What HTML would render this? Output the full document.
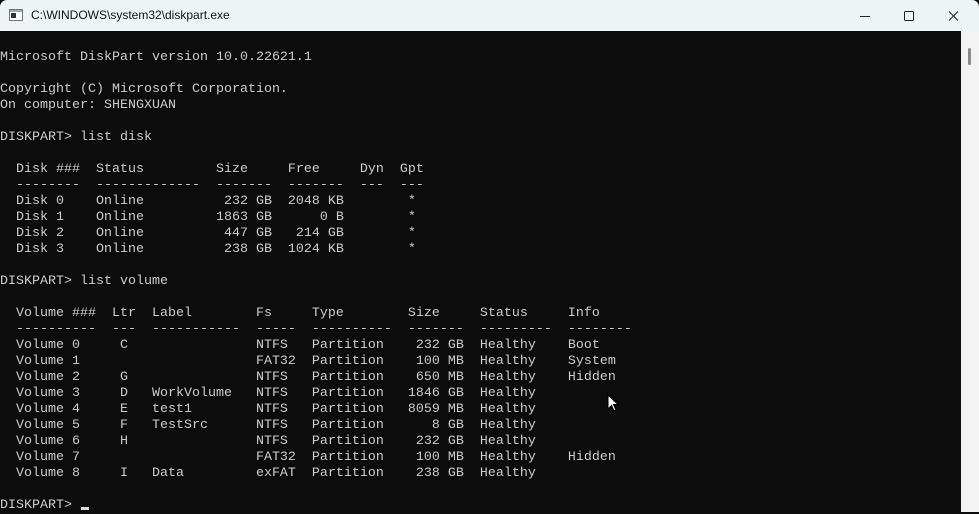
<!DOCTYPE html>
<html><head><meta charset="utf-8"><style>
html,body{margin:0;padding:0;width:979px;height:512px;overflow:hidden;background:#0c0c0c}
#tb{position:absolute;left:0;top:0;width:979px;height:31px;background:#eef4f5;border-radius:7px 7px 0 0;font-family:"Liberation Sans",sans-serif;font-size:12px;color:#111}
#title{position:absolute;left:31px;top:8px}
#con{position:absolute;left:0;top:31px;width:961px;height:481px;background:#0c0c0c}
#sb{position:absolute;left:961px;top:31px;width:18px;height:481px;background:#f3f3f3}
#thumb{position:absolute;left:968px;top:48px;width:3px;height:17px;background:#8a8a8a;border-radius:2px}
pre{position:absolute;left:0;top:50px;margin:0;font-family:"Liberation Mono",monospace;font-size:13.33px;line-height:16px;color:#cccccc}
</style></head><body>
<div id="tb">
<svg style="position:absolute;left:9px;top:9px" width="14" height="12" viewBox="0 0 14 12"><rect x="0.5" y="0.5" width="13" height="11" fill="#fff" stroke="#777"/><rect x="1" y="1" width="12" height="2" fill="#9ab"/><rect x="2" y="4" width="5" height="5" fill="#333"/></svg>
<div id="title">C:\WINDOWS\system32\diskpart.exe</div>
<svg style="position:absolute;left:858px;top:10px" width="110" height="12" viewBox="0 0 110 12" fill="none" stroke="#222" stroke-width="1"><path d="M2 6.5H12"/><rect x="46.5" y="1.5" width="9" height="9" rx="1"/><path d="M91 1.5L100 10.5M100 1.5L91 10.5"/></svg>
</div>
<div id="con"></div>
<div id="sb"></div><div id="thumb"></div>
<pre>Microsoft DiskPart version 10.0.22621.1

Copyright (C) Microsoft Corporation.
On computer: SHENGXUAN

DISKPART&gt; list disk

  Disk ###  Status         Size     Free     Dyn  Gpt
  --------  -------------  -------  -------  ---  ---
  Disk 0    Online          232 GB  2048 KB        *
  Disk 1    Online         1863 GB      0 B        *
  Disk 2    Online          447 GB   214 GB        *
  Disk 3    Online          238 GB  1024 KB        *

DISKPART&gt; list volume

  Volume ###  Ltr  Label        Fs     Type        Size     Status     Info
  ----------  ---  -----------  -----  ----------  -------  ---------  --------
  Volume 0     C                NTFS   Partition    232 GB  Healthy    Boot
  Volume 1                      FAT32  Partition    100 MB  Healthy    System
  Volume 2     G                NTFS   Partition    650 MB  Healthy    Hidden
  Volume 3     D   WorkVolume   NTFS   Partition   1846 GB  Healthy
  Volume 4     E   test1        NTFS   Partition   8059 MB  Healthy
  Volume 5     F   TestSrc      NTFS   Partition      8 GB  Healthy
  Volume 6     H                NTFS   Partition    232 GB  Healthy
  Volume 7                      FAT32  Partition    100 MB  Healthy    Hidden
  Volume 8     I   Data         exFAT  Partition    238 GB  Healthy

DISKPART&gt; </pre>
<div style="position:absolute;left:81px;top:507px;width:8px;height:3px;background:#ddd"></div>
<svg style="position:absolute;left:607px;top:394px" width="14" height="20" viewBox="0 0 14 20"><path d="M1 1V15L4.5 11.5L7 17L9 16L6.5 10.5H11Z" fill="#fff" stroke="#000" stroke-width="1"/></svg>
</body></html>
